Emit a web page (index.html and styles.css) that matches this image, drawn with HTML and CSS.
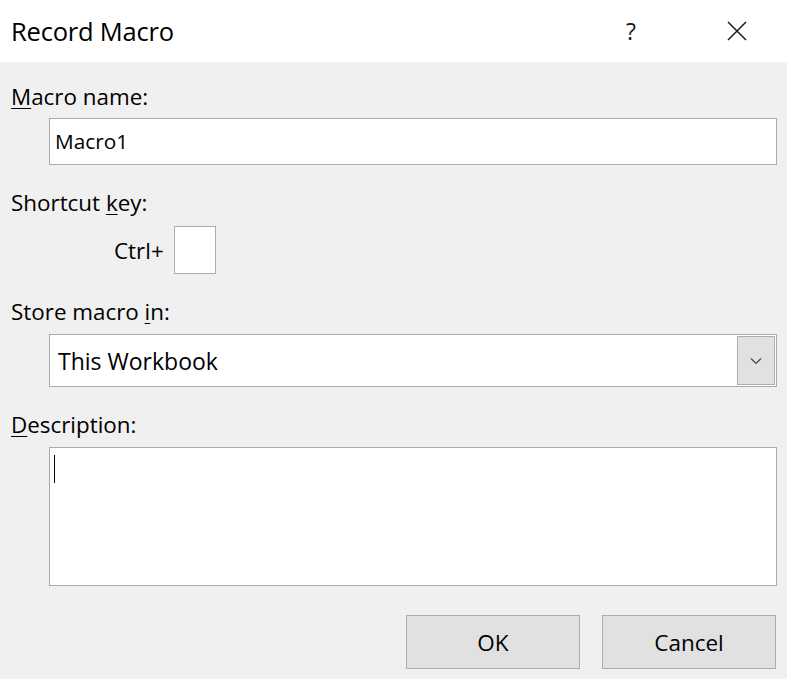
FILE: index.html
```html
<!DOCTYPE html>
<html lang="en">
<head>
<meta charset="utf-8">
<title>Record Macro</title>
<link rel="stylesheet" href="styles.css">
</head>
<body>
<div class="dialog">
  <header class="titlebar">
    <div class="title">Record Macro</div>
    <div class="title-actions">
      <span class="help">?</span>
      <span class="close">
        <svg width="20" height="20" viewBox="0 0 20 20"><path d="M1 1 L19 19 M19 1 L1 19" stroke="#1a1a1a" stroke-width="1.5" fill="none"/></svg>
      </span>
    </div>
  </header>
  <main class="body">
    <div class="label label-first"><u>M</u>acro name:</div>
    <div class="input">Macro1</div>

    <div class="label">Shortcut <u>k</u>ey:</div>
    <div class="shortcut-row">
      <span class="ctrl">Ctrl+</span>
      <span class="keybox"></span>
    </div>

    <div class="label">Store macro <u>i</u>n:</div>
    <div class="select">
      <span class="select-value">This Workbook</span>
      <span class="select-btn">
        <svg width="12" height="8" viewBox="0 0 12 8"><path d="M1 1.5 L6 6.5 L11 1.5" stroke="#444" stroke-width="1.2" fill="none"/></svg>
      </span>
    </div>

    <div class="label"><u>D</u>escription:</div>
    <div class="textarea"><span class="caret"></span></div>

    <div class="buttons">
      <button class="btn">OK</button>
      <button class="btn">Cancel</button>
    </div>
  </main>
</div>
</body>
</html>
```
FILE: styles.css
```css
html, body {
  margin: 0;
  padding: 0;
  background: #f0f0f0;
}
body {
  font-family: "Open Sans", "Noto Sans", sans-serif;
  color: #000;
  width: 787px;
  height: 679px;
  overflow: hidden;
}
.titlebar {
  height: 62px;
  background: #fff;
  display: flex;
  align-items: center;
  justify-content: space-between;
  padding-left: 11px;
}
.title {
  font-size: 25.5px;
  line-height: 30px;
  letter-spacing: -0.2px;
}
.title-actions {
  display: flex;
  align-items: center;
  height: 62px;
}
.help {
  font-size: 23px;
  line-height: 30px;
  width: 10px;
  margin-right: 91px;
  color: #1a1a1a;
}
.close {
  width: 20px;
  height: 20px;
  margin-right: 40px;
  display: flex;
}
.body {
  padding: 0 10px 0 11px;
}
.label {
  height: 30px;
  line-height: 30px;
  font-size: 22.4px;
  margin-top: 23px;
}
.label-first {
  margin-top: 20px;
}
.label u {
  text-decoration-thickness: 1px;
  text-underline-offset: 3px;
}
.input {
  margin: 6px 0 0 38px;
  height: 45px;
  border: 1px solid #acacac;
  background: #fff;
  font-size: 20.8px;
  line-height: 45px;
  padding-left: 5px;
}
.shortcut-row {
  display: flex;
  align-items: center;
  margin-top: 8px;
  height: 48px;
  padding-left: 103px;
}
.ctrl {
  font-size: 22.4px;
  margin-right: 10px;
}
.keybox {
  width: 40px;
  height: 46px;
  border: 1px solid #acacac;
  background: #fff;
}
.select {
  margin: 7px 0 0 38px;
  border: 1px solid #acacac;
  background: #fff;
  display: flex;
  align-items: center;
  justify-content: space-between;
  padding: 1px;
  box-sizing: border-box;
  height: 53px;
}
.select-value {
  font-size: 23px;
  padding-left: 7px;
}
.select-btn {
  width: 36px;
  height: 47px;
  background: #e1e1e1;
  border: 1px solid #adadad;
  display: flex;
  align-items: center;
  justify-content: center;
}
.textarea {
  margin: 7px 0 0 38px;
  border: 1px solid #acacac;
  background: #fff;
  padding: 6px 0 0 4px;
  box-sizing: content-box;
  height: 131px;
}
.caret {
  display: block;
  width: 1px;
  height: 28px;
  margin-top: 1px;
  background: #000;
}
.buttons {
  display: flex;
  justify-content: flex-end;
  gap: 22px;
  margin-top: 29px;
  padding-right: 1px;
}
.btn {
  width: 174px;
  height: 54px;
  background: #e1e1e1;
  border: 1px solid #adadad;
  font-family: "Open Sans", "Noto Sans", sans-serif;
  font-size: 22.5px;
  color: #000;
  padding: 0;
  margin: 0;
}
```
